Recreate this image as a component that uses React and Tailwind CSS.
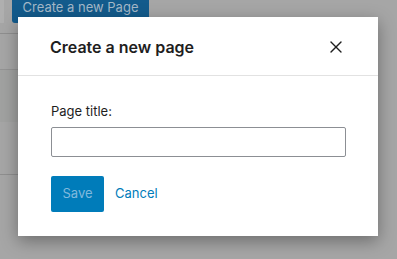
import { X } from "lucide-react";

export default function App() {
  return (
    <div
      className="relative w-[397px] h-[259px] overflow-hidden bg-[#a6a6a6]"
      style={{ fontFamily: "Inter, 'Noto Sans', sans-serif" }}
    >
      {/* page behind the overlay */}
      <div className="flex flex-col">
        <div className="flex h-[33px] items-start">
          <div className="w-[4px] h-[23px] bg-[#afafaf]" />
          <div className="ml-[8px] h-[23px] w-[137px] bg-[#135b8c] rounded-b-[3px] flex items-start justify-center overflow-hidden">
            <span className="text-[13px] leading-[15px] text-[#a4b8c8]">Create a new Page</span>
          </div>
        </div>
        <div className="w-[300px] h-[36px] border-t border-[#8f8f8f]" />
        <div className="w-[300px] h-[53px] border-t border-[#949494] bg-[#a1a2a1]" />
        <div className="w-[300px] h-[52px]" />
        <div className="w-[300px] h-[20px] border-t border-[#8f8f8f]" />
      </div>

      {/* modal */}
      <div className="absolute left-[18px] top-[17px] w-[360px] bg-white shadow-[0_5px_16px_rgba(0,0,0,0.35)]">
        <div className="h-[59px] pl-8 pr-[32px] flex items-center justify-between border-b border-[#e2e2e2]">
          <h1 className="text-[16px] font-semibold text-[#1e1e1e] pt-[2px]">Create a new page</h1>
          <button className="w-[20px] h-[20px] flex items-center justify-center text-[#1e1e1e] mt-[1px]">
            <X size={20} strokeWidth={1.6} />
          </button>
        </div>
        <div className="pl-[33px] pr-8 pt-6 pb-6 flex flex-col">
          <label className="text-[13px] leading-[20px] text-[#1e1e1e] pt-[1px]">Page title:</label>
          <input
            type="text"
            className="mt-[6px] h-[30px] w-full border border-[#8c8f94] rounded-[2px] px-2 text-[13px] outline-none"
          />
          <div className="mt-[19px] flex items-center gap-[11px]">
            <button
              disabled
              className="h-[36px] w-[53px] bg-[#007cba] text-[#80b9dd] text-[13px] rounded-[2px]"
            >
              Save
            </button>
            <button className="text-[13px] text-[#007cba]">Cancel</button>
          </div>
        </div>
      </div>
    </div>
  );
}
